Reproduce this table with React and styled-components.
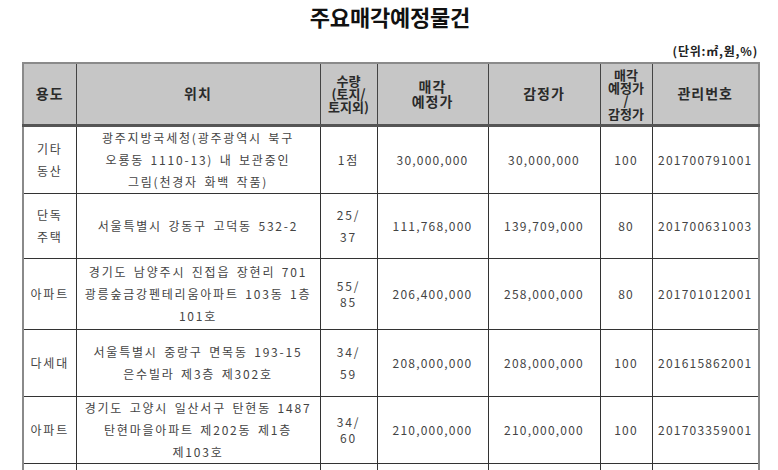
import React from "react";
import styled, { createGlobalStyle } from "styled-components";

const GlobalStyle = createGlobalStyle`
  body {
    margin: 0;
    background: #ffffff;
    font-family: "Noto Sans CJK KR", "Noto Sans", sans-serif;
    color: #333;
  }
`;

const Page = styled.div`
  width: 778px;
  height: 470px;
  overflow: hidden;
  padding: 0 20px 0 22px;
  box-sizing: border-box;
`;

const Title = styled.h1`
  margin: 0;
  padding-top: 3px;
  height: 40px;
  text-align: center;
  font-size: 22px;
  font-weight: 700;
  line-height: 26px;
  color: #111;
  letter-spacing: -0.2px;
`;

const Unit = styled.div`
  text-align: right;
  font-size: 12px;
  font-weight: 700;
  line-height: 16px;
  height: 19px;
  color: #222;
  letter-spacing: 0.8px;
`;

const Table = styled.table`
  width: 736px;
  table-layout: fixed;
  border-collapse: collapse;
  border: 2px solid #8a8a8a;
`;

const HeadRow = styled.tr`
  height: 62px;
  background-color: #c6c6c6;
  border-bottom: 3px solid #555;
`;

const TH = styled.th`
  border: 1px solid #444;
  padding: 0;
  text-align: center;
  vertical-align: middle;
  font-size: ${props => (props.tight ? "13px" : "14px")};
  font-weight: 700;
  line-height: ${props => (props.tight ? "13px" : "15px")};
  letter-spacing: ${props => (props.tight ? "0" : "1px")};
  color: #2a2a2a;
  white-space: pre-line;
`;

const Row = styled.tr`
  height: ${props => props.h}px;
`;

const TD = styled.td`
  border: 1px solid #333;
  padding: 0;
  text-align: center;
  vertical-align: middle;
  font-size: 12px;
  line-height: ${props => (props.lh ? props.lh : 22)}px;
  letter-spacing: ${props => (props.num ? "1.2px" : "1.8px")};
  word-spacing: ${props => (props.num ? "0" : "2px")};
  color: #444;
  white-space: pre-line;
`;

const cols = [53, 244, 57, 111, 112, 52, 107];

const rows = [
  {
    h: 68,
    use: "기타\n동산",
    place: "광주지방국세청(광주광역시 북구\n오룡동 1110-13) 내 보관중인\n그림(천경자 화백 작품)",
    qty: "1점",
    price: "30,000,000",
    appraisal: "30,000,000",
    ratio: "100",
    no: "201700791001"
  },
  {
    h: 65,
    use: "단독\n주택",
    place: "서울특별시 강동구 고덕동 532-2",
    qty: "25/\n37",
    price: "111,768,000",
    appraisal: "139,709,000",
    ratio: "80",
    no: "201700631003"
  },
  {
    h: 71,
    use: "아파트",
    place: "경기도 남양주시 진접읍 장현리 701\n광릉숲금강펜테리움아파트 103동 1층\n101호",
    qty: "55/\n85",
    qtyLh: 16,
    price: "206,400,000",
    appraisal: "258,000,000",
    ratio: "80",
    no: "201701012001"
  },
  {
    h: 67,
    use: "다세대",
    place: "서울특별시 중랑구 면목동 193-15\n은수빌라 제3층 제302호",
    qty: "34/\n59",
    price: "208,000,000",
    appraisal: "208,000,000",
    ratio: "100",
    no: "201615862001"
  },
  {
    h: 67,
    use: "아파트",
    place: "경기도 고양시 일산서구 탄현동 1487\n탄현마을아파트 제202동 제1층\n제103호",
    qty: "34/\n60",
    qtyLh: 16,
    price: "210,000,000",
    appraisal: "210,000,000",
    ratio: "100",
    no: "201703359001"
  }
];

export default function App() {
  return (
    <Page>
      <GlobalStyle />
      <Title>주요매각예정물건</Title>
      <Unit>(단위:㎡,원,%)</Unit>
      <Table>
        <colgroup>
          {cols.map((w, i) => (
            <col key={i} style={{ width: w }} />
          ))}
        </colgroup>
        <thead>
          <HeadRow>
            <TH>용도</TH>
            <TH>위치</TH>
            <TH tight>{"수량\n(토지/\n토지외)"}</TH>
            <TH>{"매각\n예정가"}</TH>
            <TH>감정가</TH>
            <TH tight>{"매각\n예정가\n/\n감정가"}</TH>
            <TH>관리번호</TH>
          </HeadRow>
        </thead>
        <tbody>
          {rows.map((r, i) => (
            <Row key={i} h={r.h}>
              <TD>{r.use}</TD>
              <TD>{r.place}</TD>
              <TD lh={r.qtyLh}>{r.qty}</TD>
              <TD num>{r.price}</TD>
              <TD num>{r.appraisal}</TD>
              <TD num>{r.ratio}</TD>
              <TD num>{r.no}</TD>
            </Row>
          ))}
          <Row h={60}>
            <TD />
            <TD />
            <TD />
            <TD />
            <TD />
            <TD />
            <TD />
          </Row>
        </tbody>
      </Table>
    </Page>
  );
}
